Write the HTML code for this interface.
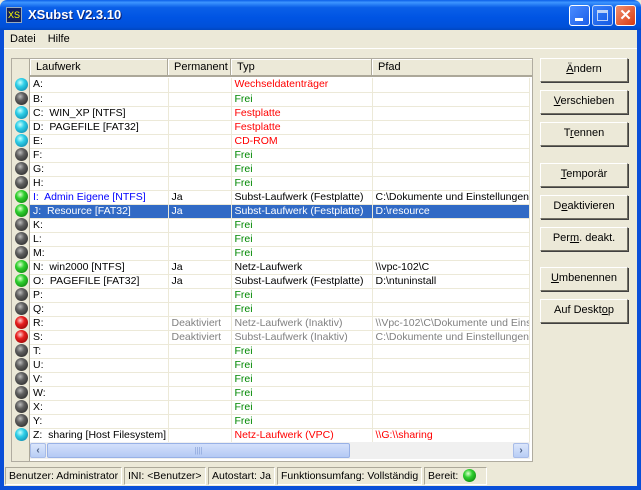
<!DOCTYPE html>
<html><head><meta charset="utf-8"><style>
*{margin:0;padding:0;box-sizing:border-box}
body{width:641px;height:490px;overflow:hidden;background:#ece9d8;font-family:"Liberation Sans",Tahoma,sans-serif;font-size:11px;position:relative}
.abs{position:absolute}
#title{left:0;top:0;width:641px;height:30px;background:linear-gradient(#0a5fe8 0%,#3d95ff 8%,#0a5fe8 25%,#0054e3 60%,#0050d8 90%,#0046c0 100%);border-radius:7px 7px 0 0}
#tt{left:28px;top:7px;color:#fff;font-weight:bold;font-size:13px;text-shadow:1px 1px #0a1e6e}
#ico{left:6px;top:7px;width:16px;height:16px;background:#102060;border:1px solid #9ab;color:#ff0;font-size:9px;line-height:14px;text-align:center}
.tb{top:5px;width:21px;height:21px;border:1px solid #fff;border-radius:3px;background:linear-gradient(135deg,#4a8cff,#1c5ee8)}
.bl{left:0;top:30px;width:4px;height:460px;background:#0a4fd8}
.br{left:637px;top:30px;width:4px;height:460px;background:#0a4fd8}
.bb{left:0;top:486px;width:641px;height:4px;background:#0a4fd8}
#menu{left:10px;top:33px}
#menu span{margin-right:12px}
#list{left:11px;top:58px;width:522px;height:404px;background:#fff;border:1px solid #b0aca0;overflow:hidden}
#icol{left:0;top:0;width:18px;height:402px;background:#ece9d8;border-right:1px solid #aca899}
#hdr{left:18px;top:0;height:18px;width:510px;background:#ece9d8;display:flex}
#hdr div{height:18px;border-right:1px solid #aca899;border-bottom:2px solid #aca899;padding:2px 0 0 6px;box-shadow:inset 1px 1px #fff}
table{position:absolute;left:18px;top:19px;border-collapse:collapse;table-layout:fixed;width:499px;font-size:10.5px}
td{height:14px;border-right:1px solid #ece9d8;border-bottom:1px solid #ece9d8;white-space:nowrap;overflow:hidden;padding-left:3px;line-height:13px;color:#000}
.r{color:#f00}.g{color:#080}.gy{color:#808080}.b{color:#00f}
tr.sel td{background:#316ac5;color:#fff}
.ball{position:absolute;left:3px;width:13px;height:13px;border-radius:50%;margin-top:-1px}
.c{background:radial-gradient(circle at 40% 35%,#c8ffff 0,#30d0e8 35%,#0878a0 100%)}
.k{background:radial-gradient(circle at 40% 35%,#bbb 0,#606060 35%,#202020 100%)}
.n{background:radial-gradient(circle at 40% 35%,#dfffd0 0,#30d030 35%,#067006 100%)}
.e{background:radial-gradient(circle at 40% 35%,#ffd0d0 0,#e82020 35%,#800000 100%)}
#hs{left:18px;top:383px;width:500px;height:17px;background:#f0f0f0}
.sb{position:absolute;top:1px;width:16px;height:15px;background:linear-gradient(#dbe6fb,#b8cdf5);border:1px solid #a8bce8;border-radius:2px;color:#4d6185;font-size:10px;text-align:center;line-height:13px;font-weight:bold}
.btn{position:absolute;left:540px;width:88px;height:24px;background:#ece9d8;border:1px solid;border-color:#fff #716f64 #716f64 #fff;box-shadow:1px 1px 0 #404040 ;text-align:center;line-height:21px}
.st{position:absolute;top:467px;height:18px;border:1px solid;border-color:#aca899 #fff #fff #aca899;padding:2px 0 0 3px;white-space:nowrap;font-size:10.5px;overflow:hidden}
</style></head><body>
<div class="abs" id="title"></div>
<div class="abs" id="ico">XS</div>
<div class="abs" id="tt">XSubst V2.3.10</div>
<div class="abs tb" style="left:569px"><div style="position:absolute;left:5px;top:12px;width:8px;height:3px;background:#fff"></div></div>
<div class="abs tb" style="left:592px;opacity:.75"><div style="position:absolute;left:4px;top:4px;width:11px;height:11px;border:1px solid #fff;border-top-width:3px"></div></div>
<div class="abs tb" style="left:615px;background:linear-gradient(135deg,#f09070,#d83a10);color:#fff;font-weight:bold;font-size:15px;text-align:center;line-height:19px">✕</div>
<div class="abs bl"></div><div class="abs br"></div><div class="abs bb"></div>
<div class="abs" style="left:4px;top:48px;width:633px;height:1px;background:#fff"></div>
<div class="abs" id="menu"><span>Datei</span><span>Hilfe</span></div>

<div class="abs" id="list">
<div class="abs" id="icol"></div>
<div class="abs" id="hdr"><div style="width:138px">Laufwerk</div><div style="width:63px">Permanent</div><div style="width:141px">Typ</div><div style="width:168px">Pfad</div></div>
<div class="ball c" style="top:20px"></div><div class="ball k" style="top:34px"></div><div class="ball c" style="top:48px"></div><div class="ball c" style="top:62px"></div><div class="ball c" style="top:76px"></div><div class="ball k" style="top:90px"></div><div class="ball k" style="top:104px"></div><div class="ball k" style="top:118px"></div><div class="ball n" style="top:132px"></div><div class="ball n" style="top:146px"></div><div class="ball k" style="top:160px"></div><div class="ball k" style="top:174px"></div><div class="ball k" style="top:188px"></div><div class="ball n" style="top:202px"></div><div class="ball n" style="top:216px"></div><div class="ball k" style="top:230px"></div><div class="ball k" style="top:244px"></div><div class="ball e" style="top:258px"></div><div class="ball e" style="top:272px"></div><div class="ball k" style="top:286px"></div><div class="ball k" style="top:300px"></div><div class="ball k" style="top:314px"></div><div class="ball k" style="top:328px"></div><div class="ball k" style="top:342px"></div><div class="ball k" style="top:356px"></div><div class="ball c" style="top:370px"></div>
<table>
<colgroup><col style="width:138px"><col style="width:63px"><col style="width:141px"><col style="width:157px"></colgroup>
<tr><td>A:</td><td></td><td class="r">Wechseldatenträger</td><td></td></tr>
<tr><td>B:</td><td></td><td class="g">Frei</td><td></td></tr>
<tr><td>C:&nbsp; WIN_XP [NTFS]</td><td></td><td class="r">Festplatte</td><td></td></tr>
<tr><td>D:&nbsp; PAGEFILE [FAT32]</td><td></td><td class="r">Festplatte</td><td></td></tr>
<tr><td>E:</td><td></td><td class="r">CD-ROM</td><td></td></tr>
<tr><td>F:</td><td></td><td class="g">Frei</td><td></td></tr>
<tr><td>G:</td><td></td><td class="g">Frei</td><td></td></tr>
<tr><td>H:</td><td></td><td class="g">Frei</td><td></td></tr>
<tr><td class="b">I:&nbsp; Admin Eigene [NTFS]</td><td>Ja</td><td>Subst-Laufwerk (Festplatte)</td><td>C:\Dokumente und Einstellungen</td></tr>
<tr class="sel"><td>J:&nbsp; Resource [FAT32]</td><td>Ja</td><td>Subst-Laufwerk (Festplatte)</td><td>D:\resource</td></tr>
<tr><td>K:</td><td></td><td class="g">Frei</td><td></td></tr>
<tr><td>L:</td><td></td><td class="g">Frei</td><td></td></tr>
<tr><td>M:</td><td></td><td class="g">Frei</td><td></td></tr>
<tr><td>N:&nbsp; win2000 [NTFS]</td><td>Ja</td><td>Netz-Laufwerk</td><td>\\vpc-102\C</td></tr>
<tr><td>O:&nbsp; PAGEFILE [FAT32]</td><td>Ja</td><td>Subst-Laufwerk (Festplatte)</td><td>D:\ntuninstall</td></tr>
<tr><td>P:</td><td></td><td class="g">Frei</td><td></td></tr>
<tr><td>Q:</td><td></td><td class="g">Frei</td><td></td></tr>
<tr><td>R:</td><td class="gy">Deaktiviert</td><td class="gy">Netz-Laufwerk (Inaktiv)</td><td class="gy">\\Vpc-102\C\Dokumente und Einst</td></tr>
<tr><td>S:</td><td class="gy">Deaktiviert</td><td class="gy">Subst-Laufwerk (Inaktiv)</td><td class="gy">C:\Dokumente und Einstellungen</td></tr>
<tr><td>T:</td><td></td><td class="g">Frei</td><td></td></tr>
<tr><td>U:</td><td></td><td class="g">Frei</td><td></td></tr>
<tr><td>V:</td><td></td><td class="g">Frei</td><td></td></tr>
<tr><td>W:</td><td></td><td class="g">Frei</td><td></td></tr>
<tr><td>X:</td><td></td><td class="g">Frei</td><td></td></tr>
<tr><td>Y:</td><td></td><td class="g">Frei</td><td></td></tr>
<tr><td>Z:&nbsp; sharing [Host Filesystem]</td><td></td><td class="r">Netz-Laufwerk (VPC)</td><td class="r">\\G:\\sharing</td></tr>
</table>
<div class="abs" id="hs">
<div class="sb" style="left:0">‹</div>
<div style="position:absolute;left:17px;top:1px;width:303px;height:15px;background:linear-gradient(#d3e0fb,#b4c9f4);border:1px solid #98b1e6;border-radius:2px;text-align:center;color:#8aa3d8;font-size:8px;line-height:13px">||||</div>
<div class="sb" style="left:483px">›</div>
</div>
</div>

<div class="btn" style="top:58px"><u>Ä</u>ndern</div>
<div class="btn" style="top:90px"><u>V</u>erschieben</div>
<div class="btn" style="top:122px">T<u>r</u>ennen</div>
<div class="btn" style="top:163px"><u>T</u>emporär</div>
<div class="btn" style="top:195px">D<u>e</u>aktivieren</div>
<div class="btn" style="top:227px">Per<u>m</u>. deakt.</div>
<div class="btn" style="top:267px"><u>U</u>mbenennen</div>
<div class="btn" style="top:299px">Auf Deskt<u>o</u>p</div>

<div class="st" style="left:5px;width:117px">Benutzer: Administrator</div>
<div class="st" style="left:124px;width:82px">INI: &lt;Benutzer&gt;</div>
<div class="st" style="left:208px;width:67px">Autostart: Ja</div>
<div class="st" style="left:277px;width:145px">Funktionsumfang: Vollständig</div>
<div class="st" style="left:424px;width:63px">Bereit:</div>
<div class="ball n" style="left:463px;top:470px"></div>
</body></html>
